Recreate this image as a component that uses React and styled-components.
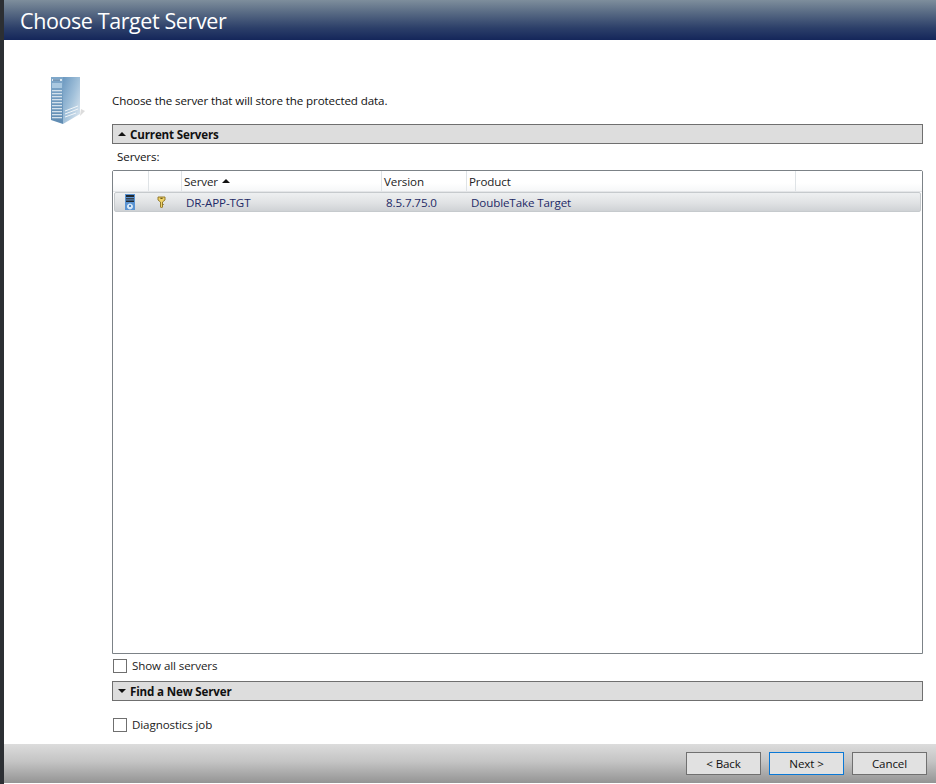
import React from 'react'
import styled, { createGlobalStyle } from 'styled-components'

const Global = createGlobalStyle`
html, body {
  margin: 0;
  padding: 0;
  background: #fff;
}
`

const Window = styled.div`
  width: 936px;
  height: 784px;
  box-sizing: border-box;
  border-left: 4px solid #2c2f33;
  display: flex;
  flex-direction: column;
  font-family: "Open Sans", "Noto Sans", sans-serif;
  font-size: 11.6px;
  letter-spacing: -0.11px;
  color: #111;
  overflow: hidden;
`

const Header = styled.div`
  height: 40px;
  flex: none;
  box-sizing: border-box;
  padding: 5px 0 0 16px;
  background: linear-gradient(to bottom, #7e8e9c 0%, #5a6c85 30%, #2c3f69 70%, #14265a 100%);
  color: #fff;
  font-size: 21.5px;
  letter-spacing: -0.4px;
  line-height: 32px;
`

const Body = styled.div`
  flex: 1;
  display: flex;
  min-height: 0;
`

const Side = styled.div`
  width: 108px;
  flex: none;
  box-sizing: border-box;
  padding: 36px 0 0 46px;
`

const Main = styled.div`
  width: 811px;
  flex: none;
  display: flex;
  flex-direction: column;
`

const Intro = styled.div`
  height: 84px;
  flex: none;
  box-sizing: border-box;
  padding-top: 53px;
  line-height: 16px;
`

const Section = styled.div`
  height: 20px;
  flex: none;
  box-sizing: border-box;
  border: 1px solid #6f6f6f;
  background: #dddddd;
  display: flex;
  align-items: center;
  padding-left: 5px;
  gap: 4px;
  font-weight: 700;
  letter-spacing: -0.16px;
`

const Arrow = styled.span`
  width: 0;
  height: 0;
  border-left: 4px solid transparent;
  border-right: 4px solid transparent;
  ${p => (p.$down ? 'border-top: 4px solid #111;' : 'border-bottom: 4px solid #111;')}
`

const Caption = styled.div`
  height: 26px;
  flex: none;
  box-sizing: border-box;
  padding: 5px 0 0 5px;
  line-height: 16px;
`

const List = styled.div`
  height: 484px;
  flex: none;
  box-sizing: border-box;
  border: 1px solid #7c8287;
  border-radius: 2px 2px 0 0;
  display: flex;
  flex-direction: column;
`

const HeadRow = styled.div`
  height: 21px;
  flex: none;
  display: flex;
  box-sizing: border-box;
  border-bottom: 1px solid #e4e6e8;
  background: linear-gradient(to bottom, #fff 0%, #fff 60%, #f6f7f8 100%);
`

const HeadCell = styled.div`
  width: ${p => p.$w}px;
  flex: none;
  box-sizing: border-box;
  border-right: 1px solid #dfe3e6;
  padding-left: ${p => p.$pad || 0}px;
  display: flex;
  align-items: center;
  gap: 4px;
  color: #222;
`

const Row = styled.div`
  height: 20px;
  margin: 0 1px;
  flex: none;
  box-sizing: border-box;
  border: 1px solid #c6cacd;
  border-radius: 2px;
  display: flex;
  align-items: center;
  background: linear-gradient(to bottom, #eef0f1 0%, #e0e2e4 55%, #cfd2d5 100%);
  color: #1e2a66;
`

const Cell = styled.div`
  width: ${p => p.$w}px;
  flex: none;
  box-sizing: border-box;
  padding-left: ${p => p.$pad || 0}px;
  display: flex;
  align-items: center;
`

const Check = styled.label`
  height: 27px;
  flex: none;
  box-sizing: border-box;
  margin-top: ${p => p.$top || 0}px;
  padding: 0 0 ${p => p.$bottom || 0}px 1px;
  display: flex;
  align-items: center;
  gap: 5px;
  color: #222;

  &::before {
    content: '';
    width: 12px;
    height: 12px;
    border: 1px solid #6f6f6f;
    background: #fff;
  }
`

const Footer = styled.div`
  height: 39px;
  flex: none;
  box-sizing: border-box;
  margin-bottom: 1px;
  padding: 8px 9px 0 0;
  display: flex;
  justify-content: flex-end;
  gap: 8px;
  background: linear-gradient(to bottom, #dcdcdc 0%, #c4c4c4 45%, #949494 100%);
`

const Button = styled.button`
  width: 75px;
  height: 23px;
  box-sizing: border-box;
  padding: 0;
  border: 1px solid ${p => (p.$focus ? '#0a78d6' : '#707070')};
  background: #e1e1e1;
  font: inherit;
  letter-spacing: inherit;
  color: #111;
`

const ServerArt = () => (
  <svg width="36" height="50" viewBox="0 0 36 50">
    <defs>
      <linearGradient id="srvLeft" x1="0" y1="0" x2="0" y2="1">
        <stop offset="0" stopColor="#7fa8ca" />
        <stop offset="1" stopColor="#5f8bb2" />
      </linearGradient>
      <linearGradient id="srvRight" x1="0" y1="0" x2="1" y2="1">
        <stop offset="0" stopColor="#6b98c0" />
        <stop offset="0.5" stopColor="#a2c1da" />
        <stop offset="1" stopColor="#e4ecf3" />
      </linearGradient>
    </defs>
    <path d="M30 40 L35 35 L31 33 Z" fill="#dcdcdc" />
    <path d="M1 1 H13 V48 L1 44 Z" fill="url(#srvLeft)" />
    <path d="M13 1 H30 V38 L13 48 Z" fill="url(#srvRight)" />
    <path d="M2 3 H12 V5 H2 Z" fill="#dbe8f2" />
    <path d="M3 3.5 H10 V4.6 H3 Z" fill="#2f5f8c" />
    <path d="M2 7 H12 V12 H2 Z" fill="#a9c8e0" />
    {[14, 17, 20, 23, 26, 29, 32, 35, 38, 41].map(y => (
      <path key={y} d={`M2 ${y} H12 V${y + 1.3} H2 Z`} fill="#d3e1ec" />
    ))}
    <path d="M15 35 L28 30 M15 38 L28 33 M15 41 L26 37" stroke="#f2f6f9" strokeWidth="1" />
  </svg>
)

const ServerIcon = () => (
  <svg width="10" height="16" viewBox="0 0 10 16" style={{ display: 'block' }}>
    <rect width="10" height="16" fill="#5a93d2" />
    <rect x="1" y="1" width="8" height="2" fill="#22282e" />
    <rect x="1" y="4" width="8" height="1.5" fill="#3a4650" />
    <rect x="1" y="6.5" width="8" height="1.5" fill="#22282e" />
    <path d="M5 9.5 A3 3 0 1 1 4.9 9.5 Z" fill="#d5e7f8" />
    <rect x="4" y="11" width="2" height="2" fill="#4d86c6" />
  </svg>
)

const KeyIcon = () => (
  <svg width="9" height="12" viewBox="0 0 9 12" style={{ display: 'block' }}>
    <path d="M1 1 H8 V4 L5.5 6 V11 L4.5 12 L3.5 11 V6 L1 4 Z" fill="#efd36a" stroke="#8a7020" strokeWidth="0.9" />
    <rect x="3.4" y="1.8" width="2.2" height="1.2" fill="#6f5a18" />
    <rect x="5.5" y="8" width="1.2" height="1" fill="#8a7020" />
  </svg>
)

const App = () => (
  <>
    <Global />
    <Window>
      <Header>Choose Target Server</Header>
      <Body>
        <Side>
          <ServerArt />
        </Side>
        <Main>
          <Intro>Choose the server that will store the protected data.</Intro>
          <Section>
            <Arrow />
            Current Servers
          </Section>
          <Caption>Servers:</Caption>
          <List>
            <HeadRow>
              <HeadCell $w={36} />
              <HeadCell $w={33} />
              <HeadCell $w={200} $pad={2}>
                Server <Arrow />
              </HeadCell>
              <HeadCell $w={85} $pad={2}>Version</HeadCell>
              <HeadCell $w={329} $pad={2}>Product</HeadCell>
            </HeadRow>
            <Row>
              <Cell $w={34} $pad={10}><ServerIcon /></Cell>
              <Cell $w={33} $pad={8}><KeyIcon /></Cell>
              <Cell $w={201} $pad={4}>DR-APP-TGT</Cell>
              <Cell $w={85} $pad={3}>8.5.7.75.0</Cell>
              <Cell $w={320} $pad={3}>DoubleTake Target</Cell>
            </Row>
          </List>
          <Check $bottom={4}>Show all servers</Check>
          <Section>
            <Arrow $down />
            Find a New Server
          </Section>
          <Check $top={10}>Diagnostics job</Check>
        </Main>
      </Body>
      <Footer>
        <Button>&lt; Back</Button>
        <Button $focus>Next &gt;</Button>
        <Button>Cancel</Button>
      </Footer>
    </Window>
  </>
)

export default App
